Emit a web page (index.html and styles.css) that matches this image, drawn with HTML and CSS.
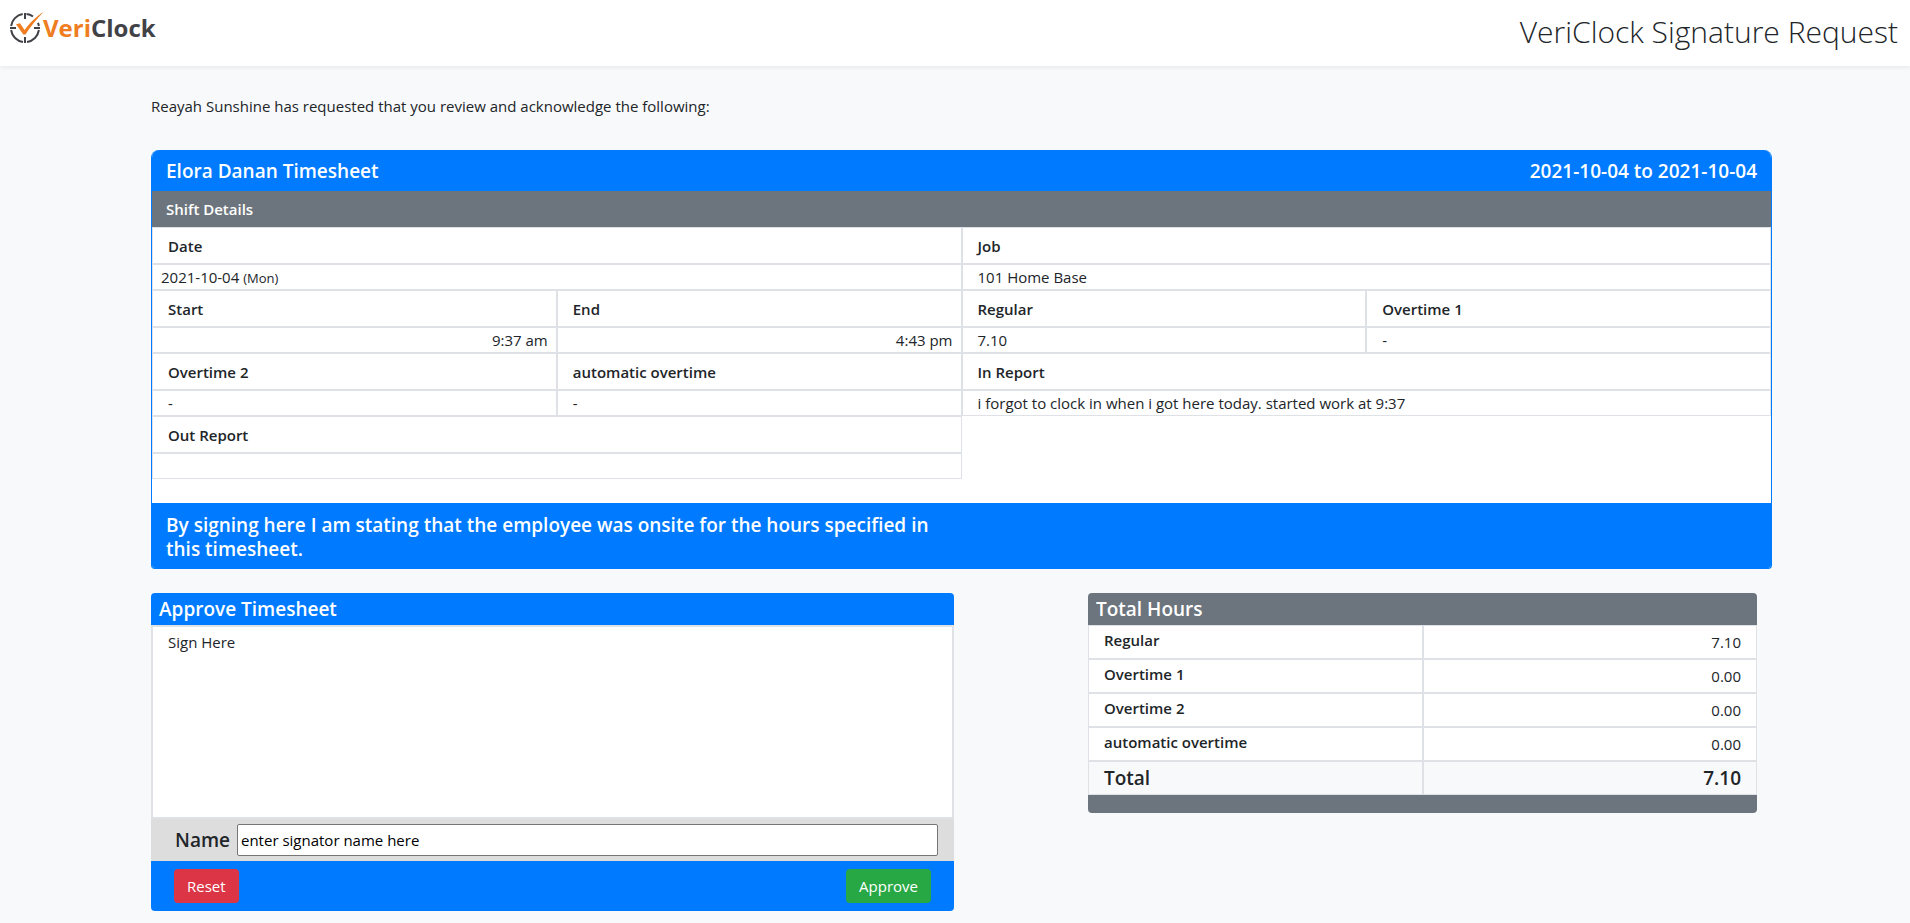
FILE: index.html
```html
<!DOCTYPE html>
<html lang="en">
<head>
<meta charset="utf-8">
<meta name="viewport" content="width=device-width, initial-scale=1">
<title>VeriClock Signature Request</title>
<link rel="stylesheet" href="styles.css">
</head>
<body>
<header class="topbar">
  <div class="logo">
    <svg class="logo-mark" viewBox="0 0 36 34" aria-hidden="true">
      <g fill="none" stroke="#414246" stroke-width="2">
        <path d="M13.7 3.1A14 14 0 0 0 2.1 15M2.1 19A14 14 0 0 0 14 30.9M18 30.9A14 14 0 0 0 29.9 19M29.9 15A14 14 0 0 0 29 11.8M24 5.5A14 14 0 0 0 17.5 3.1"/>
        <path d="M16 2v6M16 26v6M1 17h6M25 17h6"/>
      </g>
      <path d="M7 13.2l4-.9 4.6 6.6C20.500 12.500 27 5.500 34.500 1 27 8.500 21 16.500 16.500 23.500h-2.200z" fill="#ef7d22"/>
    </svg>
    <span class="logo-text"><span class="logo-accent">Veri</span>Clock</span>
  </div>
  <h1 class="page-title">VeriClock Signature Request</h1>
</header>
<main class="content">
  <p class="intro">Reayah Sunshine has requested that you review and acknowledge the following:</p>

  <section class="timesheet">
    <div class="timesheet-head">
      <h2 class="heading">Elora Danan Timesheet</h2>
      <span class="heading">2021-10-04 to 2021-10-04</span>
    </div>
    <h3 class="shift-title">Shift Details</h3>
    <table class="shift">
      <colgroup><col><col><col><col></colgroup>
      <tbody>
        <tr><th colspan="2">Date</th><th colspan="2">Job</th></tr>
        <tr><td class="tight" colspan="2">2021-10-04 <small>(Mon)</small></td><td colspan="2">101 Home Base</td></tr>
        <tr><th>Start</th><th>End</th><th>Regular</th><th>Overtime 1</th></tr>
        <tr><td class="tight time">9:37 am</td><td class="tight time">4:43 pm</td><td>7.10</td><td>-</td></tr>
        <tr><th>Overtime 2</th><th>automatic overtime</th><th colspan="2">In Report</th></tr>
        <tr><td>-</td><td>-</td><td colspan="2">i forgot to clock in when i got here today. started work at 9:37</td></tr>
        <tr><th colspan="2">Out Report</th></tr>
        <tr><td colspan="2"></td></tr>
      </tbody>
    </table>
    <div class="timesheet-foot">
      <p class="heading statement">By signing here I am stating that the employee was onsite for the hours specified in this timesheet.</p>
    </div>
  </section>

  <div class="panels">
    <form class="approve">
      <h2 class="panel-head heading">Approve Timesheet</h2>
      <div class="sign-area">Sign Here</div>
      <div class="name-row">
        <label class="name-label" for="signator">Name</label>
        <input class="name-input" id="signator" type="text" value="enter signator name here">
      </div>
      <div class="actions">
        <button class="btn btn-reset" type="button">Reset</button>
        <button class="btn btn-approve" type="button">Approve</button>
      </div>
    </form>

    <section class="totals">
      <h2 class="panel-head heading">Total Hours</h2>
      <table class="hours">
        <tbody>
          <tr><th>Regular</th><td>7.10</td></tr>
          <tr><th>Overtime 1</th><td>0.00</td></tr>
          <tr><th>Overtime 2</th><td>0.00</td></tr>
          <tr><th>automatic overtime</th><td>0.00</td></tr>
        </tbody>
        <tfoot>
          <tr class="grand"><th>Total</th><td>7.10</td></tr>
        </tfoot>
      </table>
    </section>
  </div>
</main>
</body>
</html>
```
FILE: styles.css
```css
* { box-sizing: border-box; }

body {
  margin: 0;
  background: #f8f9fa;
  color: #212529;
  font-family: "Open Sans", "Noto Sans", sans-serif;
  font-size: 15px;
  line-height: 24px;
}

h1, h2, h3, p { margin: 0; }

.topbar {
  display: flex;
  align-items: center;
  justify-content: space-between;
  height: 66px;
  padding: 0 12px 0 9px;
  background: #fff;
  box-shadow: 0 2px 4px rgba(0, 0, 0, .06);
}

.logo {
  display: flex;
  align-items: center;
  padding-bottom: 10px;
  color: #414246;
}
.logo-mark { width: 36px; height: 34px; margin-right: -2px; }
.logo-text { font-size: 24px; font-weight: 700; line-height: 34px; }
.logo-accent { color: #ef7d22; }

.page-title { padding-bottom: 2px; font-size: 30px; font-weight: 300; line-height: 40px; }

.content { padding: 28px 138px 12px 151px; }

.intro { margin-bottom: 32px; }

.heading { font-size: 19px; font-weight: 600; line-height: 24px; }

.timesheet {
  overflow: hidden;
  border: 1px solid #007bff;
  border-top: 0;
  border-radius: 8px 8px 4px 4px;
  background: #fff;
}
.timesheet-head {
  display: flex;
  justify-content: space-between;
  padding: 9px 14px 8px;
  background: #007bff;
  color: #fff;
}
.shift-title {
  padding: 6px 14px;
  background: #6c757d;
  color: #fff;
  font-size: 15px;
  font-weight: 600;
  line-height: 24px;
}

table {
  width: 100%;
  border-collapse: separate;
  border-spacing: 0;
  table-layout: fixed;
}
th, td {
  border: 1px solid #dee2e6;
  padding: 0 15px;
  text-align: left;
}
th { font-weight: 600; }

.shift { margin-bottom: 24px; }
.shift th { height: 37px; }
.shift td { height: 26px; }
.shift .tight { padding: 0 8px; }
.shift .time { text-align: right; }
small { font-size: 13px; line-height: 16px; }

.timesheet-foot {
  padding: 10px 14px 7px;
  background: #007bff;
  color: #fff;
}
.statement { width: 48%; }

.panels {
  display: grid;
  grid-template-columns: 803fr 669fr;
  gap: 134px;
  align-items: start;
  margin-top: 24px;
  padding-right: 15px;
}
.panel-head { padding: 4px 8px; color: #fff; }

.approve {
  overflow: hidden;
  border-radius: 4px;
  background: #007bff;
}
.sign-area {
  height: 194px;
  padding: 3px 15px;
  border: 2px solid #dee2e6;
  background: #fff;
}
.name-row {
  display: flex;
  align-items: center;
  gap: 7px;
  padding: 5px 16px 5px 24px;
  background: #ddd;
}
.name-label { font-size: 19px; font-weight: 600; }
.name-input {
  flex: 1;
  min-width: 0;
  height: 32px;
  padding: 1px 3px;
  border: 1px solid #767676;
  border-radius: 2px;
  background: #fff;
  color: #000;
  font: inherit;
}
.actions {
  display: flex;
  justify-content: space-between;
  padding: 8px 23px;
}
.btn {
  height: 34px;
  padding: 0 13px;
  border: 0;
  border-radius: 4px;
  color: #fff;
  font: inherit;
}
.btn-reset { background: #dc3545; }
.btn-approve { background: #28a745; }

.totals {
  overflow: hidden;
  padding-bottom: 18px;
  border-radius: 4px;
  background: #6c757d;
}
.hours th, .hours td { height: 34px; background: #fff; }
.hours th { padding-bottom: 4px; }
.hours td { text-align: right; }
.hours .grand th, .hours .grand td {
  padding-bottom: 0;
  background: #f8f9fa;
  font-size: 19px;
  font-weight: 600;
}
```
